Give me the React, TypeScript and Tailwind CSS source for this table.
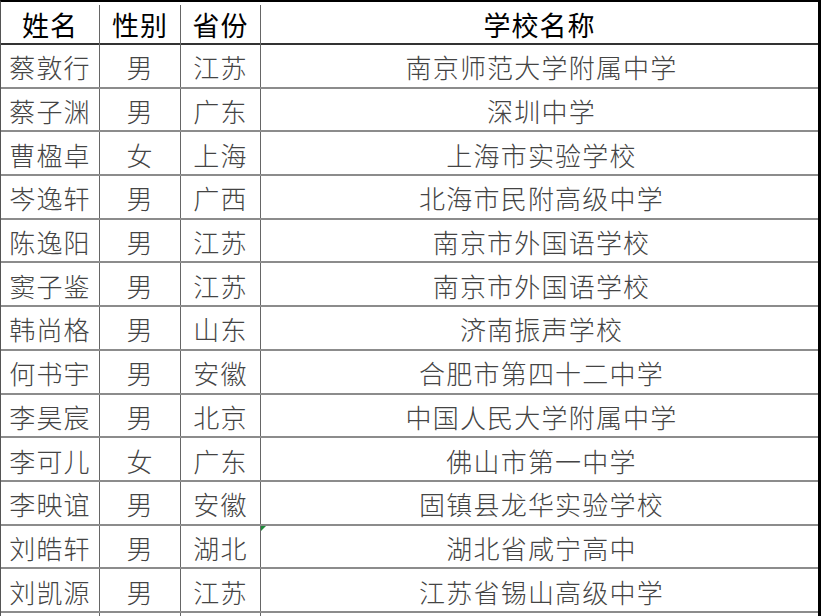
const rows: [string, string, string, string][] = [
  ["蔡敦行", "男", "江苏", "南京师范大学附属中学"],
  ["蔡子渊", "男", "广东", "深圳中学"],
  ["曹楹卓", "女", "上海", "上海市实验学校"],
  ["岑逸轩", "男", "广西", "北海市民附高级中学"],
  ["陈逸阳", "男", "江苏", "南京市外国语学校"],
  ["窦子鉴", "男", "江苏", "南京市外国语学校"],
  ["韩尚格", "男", "山东", "济南振声学校"],
  ["何书宇", "男", "安徽", "合肥市第四十二中学"],
  ["李昊宸", "男", "北京", "中国人民大学附属中学"],
  ["李可儿", "女", "广东", "佛山市第一中学"],
  ["李映谊", "男", "安徽", "固镇县龙华实验学校"],
  ["刘皓轩", "男", "湖北", "湖北省咸宁高中"],
  ["刘凯源", "男", "江苏", "江苏省锡山高级中学"],
  ["", "", "", ""],
];

const grid = "grid grid-cols-[99px_81px_80px_1fr]";

export default function App() {
  return (
    <div
      className="h-[616px] w-[821px] overflow-hidden bg-white"
      style={{ fontFamily: '"Noto Sans CJK SC", "Noto Sans", sans-serif' }}
    >
      <div className="border-t-2 border-r-[3px] border-l border-t-black border-r-black border-l-[#555]">
        <div className={`${grid} h-[43px] border-b-2 border-[#333] pt-[3px] text-[27px] tracking-[1px] text-black`}>
          <div className="flex items-center justify-center border-r border-[#666]">姓名</div>
          <div className="flex items-center justify-center border-r border-[#666]">性别</div>
          <div className="flex items-center justify-center border-r border-[#666]">省份</div>
          <div className="flex items-center justify-center">学校名称</div>
        </div>
        {rows.map((r, i) => (
          <div
            key={i}
            className={`${grid} h-[43.7px] border-b-2 border-[#8c8c8c] text-[26px] font-light tracking-[1.2px] text-[#444]`}
          >
            <div className="flex items-center justify-center border-r border-[#666] pt-[2px]">{r[0]}</div>
            <div className="flex items-center justify-center border-r border-[#666] pt-[2px]">{r[1]}</div>
            <div className="flex items-center justify-center border-r border-[#666] pt-[2px]">{r[2]}</div>
            <div className="relative flex items-center justify-center pt-[2px] pl-[4px]">
              {i === 11 && (
                <span className="absolute left-0 top-0 h-0 w-0 border-t-[5px] border-r-[5px] border-t-[#1e8a3a] border-r-transparent" />
              )}
              {r[3]}
            </div>
          </div>
        ))}
      </div>
    </div>
  );
}
